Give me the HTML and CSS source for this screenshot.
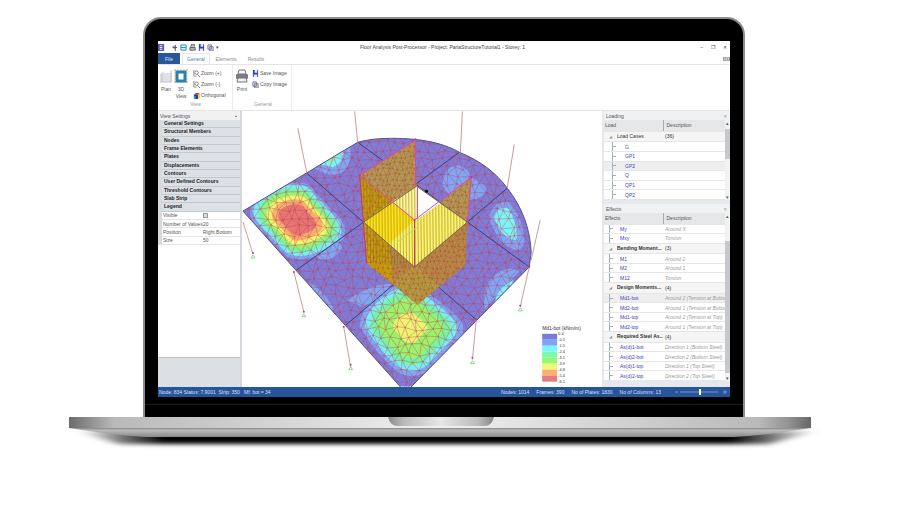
FILE: index.html
```html
<!DOCTYPE html>
<html lang="en">
<head>
<meta charset="utf-8">
<title>Floor Analysis Post-Processor</title>
<link rel="stylesheet" href="styles.css">
</head>
<body>
<main class="laptop">
  <div class="lid">
    <div class="app">
      <header class="titlebar">
        <div class="quick">
          <svg viewBox="0 0 8 8"><rect width="7" height="8" fill="#5a55b8"/><path d="M2 2h3M2 4h3M2 6h3" stroke="#fff"/></svg>
          <svg class="gap" viewBox="0 0 8 8"><path d="M1 3l4-2v6z" fill="#b99"/><path d="M5 1v7M2 4h5" stroke="#555"/></svg>
          <svg viewBox="0 0 8 8"><path d="M1 1h6v6h-6zM1 4h6" fill="#d6f0fa" stroke="#2489b4"/></svg>
          <svg viewBox="0 0 8 8"><path d="M2 3l1-3h3v3M1 4h6v3h-6z" fill="#bbb" stroke="#555"/></svg>
          <svg viewBox="0 0 8 8"><path d="M1 0h6v8h-6z" fill="#3543a8"/><path d="M3 0h3v3h-3zM2 5h4v3h-4z" fill="#e4e7fa"/></svg>
          <svg viewBox="0 0 8 8"><path d="M1 1h4v5h-4zM3 3h4v5h-4z" fill="#e4e6f6" stroke="#6c6f98"/></svg>
          <span>▾</span>
        </div>
        <h1>Floor Analysis Post-Processor - Project: ParlaStructureTutorial1 - Storey: 1</h1>
        <div class="win"><button aria-label="Minimize">–</button><button aria-label="Maximize">❐</button><button aria-label="Close">✕</button></div>
      </header>
      <nav class="tabs">
        <button class="file">File</button><button class="current">General</button><button>Elements</button><button>Results</button>
        <svg class="help" viewBox="0 0 8 6"><path d="M0 1h8v4h-8z" fill="#8b9096"/><path d="M2 2v2M4 2v2M6 2v2" stroke="#fff"/></svg>
      </nav>
      <section class="ribbon">
        <div class="group view">
          <div class="tools">
            <button class="big"><svg viewBox="0 0 14 14"><path d="M1 5l4-3v11h-4zM5 4h8v9h-8z" fill="#dfe1e6"/><path d="M1 13h12M12 1v12M3 5v8" stroke="#c0c3cc"/></svg>Plan</button>
            <button class="big"><svg viewBox="0 0 14 14"><path d="M1 0v14M13 0v14M0 1h14M0 13h14" stroke="#e2bd78" stroke-dasharray="2 1"/><rect x="3" y="3" width="8" height="9" fill="#fff" stroke="#2581ad" stroke-width="3"/></svg>3D<br>View</button>
            <div class="stack">
              <button><svg viewBox="0 0 8 8"><path d="M1 0v7h3" fill="none" stroke="#888"/><circle cx="4" cy="3" r="2" fill="#fff" stroke="#777"/><path d="M5 5l3 3" stroke="#a55"/></svg>Zoom (+)</button>
              <button><svg viewBox="0 0 8 8"><path d="M1 0v7h3" fill="none" stroke="#888"/><circle cx="4" cy="3" r="2" fill="#fff" stroke="#777"/><path d="M5 5l3 3" stroke="#777"/></svg>Zoom (-)</button>
              <button><svg viewBox="0 0 8 8"><path d="M1 3l2-2h5l-2 2z" fill="#d33b42"/><path d="M1 3h5v5h-5z" fill="#253a9c"/><path d="M6 3l2-2v5l-2 2z" fill="#ffd42a"/><path d="M1 5h2v3h-2z" fill="#29b0c8"/></svg>Orthogonal</button>
            </div>
          </div>
          <span class="caption">View</span>
        </div>
        <div class="group general">
          <div class="tools">
            <button class="big"><svg viewBox="0 0 14 14"><path d="M3 5l1-4h6l1 4z" fill="#f7f7f7" stroke="#777"/><rect x="1" y="5" width="12" height="5" rx="1" fill="#777c82"/><path d="M3 9h8l1 4h-10z" fill="#eef1f3" stroke="#777"/></svg>Print</button>
            <div class="stack">
              <button><svg viewBox="0 0 8 8"><path d="M1 0h6v8h-6z" fill="#3543a8"/><path d="M3 0h3v3h-3zM2 5h4v3h-4z" fill="#e4e7fa"/></svg>Save Image</button>
              <button><svg viewBox="0 0 8 8"><path d="M1 1h4v5h-4zM3 3h4v5h-4z" fill="#e4e6f6" stroke="#6c6f98"/></svg>Copy Image</button>
            </div>
          </div>
          <span class="caption">General</span>
        </div>
      </section>
      <div class="workspace">
        <aside class="settings">
          <h2 class="panel-title"><span>View Settings</span><i>▪</i></h2>
          <div class="rows">
            <b>General Settings</b><b>Structural Members</b><b>Nodes</b><b>Frame Elements</b><b>Plates</b><b>Displacements</b><b>Contours</b><b>User Defined Contours</b><b>Threshold Contours</b><b>Slab Strip</b><b>Legend</b>
            <div class="prop"><label for="visible">Visible</label><input id="visible" type="checkbox" checked></div>
            <div class="prop"><label for="count">Number of Values</label><input id="count" type="text" value="20"></div>
            <div class="prop"><label for="position">Position</label><select id="position"><option>Right Bottom</option></select></div>
            <div class="prop"><label for="size">Size</label><input id="size" type="text" value="50"></div>
          </div>
          <div class="hint"></div>
        </aside>
        <section class="canvas">
          <svg id="model" viewBox="242 111 361 276" role="img" aria-label="Slab moment contours">
            <defs>
              <clipPath id="slab"><path d="M243 211L358 142Q372 138 392 138C423 138 444 143 460 152C482 161 497 173 508 188C523 207 531 229 532 252L530 267L406 393Z"/></clipPath>
              <clipPath id="walls"><path d="M360 175L416 140L417 186L364 222ZM472 177L441 202L468 222ZM364 222L415 267L468 222L466 265L418 305L367 263Z"/></clipPath>
              <clipPath id="inner"><path d="M360 175L415 220L441 203L468 222L415 267L369 263Z"/><path d="M364 222L417 186V220L415 267Z"/></clipPath>
            </defs>
            <g clip-path="url(#slab)">
              <path d="M242 111h361v276h-361z" fill="#807bd5"/>
              <g fill="#80a6f5">
                <path d="M315 168L350 145Q353 163 345 170Q333 180 315 168Z"/>
                <path d="M443 184Q446 165 458 165Q470 167 471 177Q484 182 487 189Q484 200 466 200Q447 197 443 184Z"/>
                <path d="M490 218Q493 201 509 202Q524 217 525 241Q524 250 517 250Q499 246 490 218Z"/>
                <path d="M485 306Q482 287 496 275Q507 265 520 271L485 310Z"/>
                <path d="M307 283Q319 284 333 307V313Z"/>
                <path d="M347 301Q368 284 392 284Q379 300 363 307Z"/>
                <path d="M316 256Q344 236 342 248Q335 262 320 259Z"/>
              </g>
              <path d="M321 164L343 150Q345 162 333 167ZM495 218Q499 204 510 209Q520 229 517 240Q502 239 495 218ZM495 305Q496 290 514 280V292Z" fill="#7ef3f5"/>
              <path d="M326 161L337 153Q338 160 332 163Z" fill="#88efb5"/>
              <g id="peakA"></g>
              <g id="peakB"></g>
              <g id="mesh" stroke="#bd4058" fill="none"></g>
              <path d="M307 173L477 320M358 142L530 267M294 272L364 222L460 152M344 327L468 222L508 188" fill="none" stroke="#35417e"/>
            </g>
            <path d="M243 211L358 142Q372 138 392 138C423 138 444 143 460 152C482 161 497 173 508 188C523 207 531 229 532 252L530 267L406 393Z" fill="none" stroke="#55508f"/>
            <path d="M360 175L416 140L417 186L364 222ZM472 177L441 202L468 222Z" fill="#b29b58"/>
            <path d="M364 222L415 267L468 222L466 265L418 305L367 263Z" fill="#b78b48"/>
            <path d="M393 283L415 265L440 286L418 305Z" fill="#b1a640" opacity=".7"/>
            <path d="M360 175L393 201L364 222ZM364 222L390 245L393 283L367 263Z" fill="#c9a208"/>
            <path d="M364 222L417 186L468 222L415 267Z" fill="#fff46a"/>
            <path d="M364 222L393 201L415 220L390 244Z" fill="#ffe414"/>
            <path d="M393 201L417 186V220Z" fill="#fff69a"/>
            <g clip-path="url(#walls)"><g id="wallmesh" stroke="#a95a32" fill="none"></g></g>
            <g clip-path="url(#inner)"><g id="ribs" stroke="#89752a" fill="none"></g></g>
            <path d="M418 186L441 203L418 219Z" fill="#fff"/>
            <path d="M364 222L417 186L468 222L415 267Z" fill="none" stroke="#756a4c"/>
            <path d="M360 175L416 140V186M360 175L415 220L472 177L468 222M418 186V219" fill="none" stroke="#e045ae"/>
            <path d="M360 175L367 263M415 220V267" fill="none" stroke="#c63868"/>
            <circle cx="427" cy="191" r="1.6" fill="#111"/>
            <path d="M398 242L418 227" stroke="#b3e34a"/>
            <path d="M298 128L307 173M355 111L358 142M463 111L461 152M515 144L508 188M541 220L532 260M243 222L253 254M294 272L304 312M344 327L351 368M477 320L473 360M530 267L521 307" fill="none" stroke="#cf9b9b"/>
            <g fill="#d0308e"><circle cx="253" cy="253" r="1"/><circle cx="304" cy="312" r="1"/><circle cx="351" cy="365" r="1"/><circle cx="473" cy="358" r="1"/><circle cx="521" cy="306" r="1"/><circle cx="294" cy="272" r="1"/><circle cx="344" cy="327" r="1"/><circle cx="477" cy="320" r="1"/><circle cx="530" cy="267" r="1"/><circle cx="360" cy="175" r="1"/><circle cx="416" cy="139" r="1"/><circle cx="472" cy="177" r="1"/><circle cx="415" cy="267" r="1"/><circle cx="415" cy="220" r="1"/></g>
            <path d="M251 258l2-3 2 3zM302 317l2-3 2 3zM349 370l2-3 2 3zM471 364l2-3 2 3zM519 311l2-3 2 3z" fill="none" stroke="#80df86"/>
            <text class="scale-title" x="543" y="330">Md1-bot (kNm/m)</text>
            <g id="scale"></g>
          </svg>
        </section>
        <aside class="trees">
          <section class="tree">
            <h2 class="panel-title"><span>Loading</span><i>▿</i></h2>
            <div class="scroll">
              <table class="loads">
                <thead><tr><th>Load</th><th>Description</th></tr></thead>
                <tbody>
                  <tr class="parent"><td><i>◢</i>Load Cases</td><td>(36)</td></tr>
                  <tr><td>G</td><td></td></tr><tr><td>GP1</td><td></td></tr><tr class="chosen"><td>GP2</td><td></td></tr><tr><td>Q</td><td></td></tr><tr><td>QP1</td><td></td></tr><tr><td>QP2</td><td></td></tr>
                </tbody>
              </table>
              <div class="bar"><span>▴</span><div class="thumb high"></div><span>▾</span></div>
            </div>
          </section>
          <section class="tree">
            <h2 class="panel-title"><span>Effects</span><i>▿</i></h2>
            <div class="scroll">
              <table class="effects">
                <thead><tr><th>Effects</th><th>Description</th></tr></thead>
                <tbody>
                  <tr><td>My</td><td>Around X</td></tr><tr><td>Mxy</td><td>Torsion</td></tr>
                  <tr class="parent strong"><td><i>◢</i>Bending Moment...</td><td>(3)</td></tr>
                  <tr><td>M1</td><td>Around 2</td></tr><tr><td>M2</td><td>Around 1</td></tr><tr><td>M12</td><td>Torsion</td></tr>
                  <tr class="parent strong"><td><i>◢</i>Design Moments...</td><td>(4)</td></tr>
                  <tr class="chosen"><td>Md1-bot</td><td>Around 2 (Tension at Bottom</td></tr><tr><td>Md2-bot</td><td>Around 1 (Tension at Bottom</td></tr><tr><td>Md1-top</td><td>Around 2 (Tension at Top)</td></tr><tr><td>Md2-top</td><td>Around 1 (Tension at Top)</td></tr>
                  <tr class="parent strong"><td><i>◢</i>Required Steel As...</td><td>(4)</td></tr>
                  <tr><td>As(d)1-bot</td><td>Direction 1 (Bottom Steel)</td></tr><tr><td>As(d)2-bot</td><td>Direction 2 (Bottom Steel)</td></tr><tr><td>As(d)1-top</td><td>Direction 1 (Top Steel)</td></tr><tr><td>As(d)2-top</td><td>Direction 2 (Top Steel)</td></tr>
                </tbody>
              </table>
              <div class="bar"><span>▴</span><div class="thumb low"></div><span>▾</span></div>
            </div>
          </section>
        </aside>
      </div>
      <footer class="status">
        <span>Node: 834 Status: 7.9001&nbsp; Strip: 350&nbsp; &nbsp;Mf: bot = 34</span>
        <span class="push">Nodes: 1014</span><span>Frames: 390</span><span>No of Plates: 1830</span><span>No of Columns: 13</span>
        <svg viewBox="0 0 52 8"><path d="M0 4h3M5 4h38M48 4h4M50 2v4" stroke="#7197cf"/><path d="M25 1v6" stroke="#fff" stroke-width="2"/></svg>
      </footer>
    </div>
    <div class="chin"></div>
  </div>
  <svg class="base" viewBox="0 0 742 40" aria-hidden="true">
    <defs>
      <linearGradient id="deck"><stop offset="0" stop-color="#6b6b6b"/><stop offset=".03" stop-color="#929292"/><stop offset=".06" stop-color="#b9b9b9"/><stop offset=".5" stop-color="#f0f0f0"/><stop offset=".93" stop-color="#b9b9b9"/><stop offset=".97" stop-color="#929292"/><stop offset="1" stop-color="#666"/></linearGradient>
      <linearGradient id="notch"><stop offset="0" stop-color="#8a8a8a"/><stop offset=".15" stop-color="#bbb"/><stop offset=".5" stop-color="#e6e6e6"/><stop offset=".85" stop-color="#bbb"/><stop offset="1" stop-color="#858585"/></linearGradient>
      <linearGradient id="under" x2="0" y2="1"><stop offset="0" stop-color="#888"/><stop offset=".25" stop-color="#bbb"/><stop offset="1" stop-color="#888"/></linearGradient>
      <linearGradient id="fade"><stop offset="0" stop-color="#000" stop-opacity="0"/><stop offset=".12" stop-color="#000"/><stop offset=".88" stop-color="#000"/><stop offset="1" stop-color="#000" stop-opacity="0"/></linearGradient>
      <filter id="soft" x="-5%" y="-100%" width="110%" height="300%"><feGaussianBlur stdDeviation="5 2"/></filter>
    </defs>
    <path d="M6 14H750L700 27H50Z" fill="url(#fade)" filter="url(#soft)"/>
    <path d="M0 11H742Q700 18 665 20H77Q42 18 0 11Z" fill="url(#under)"/>
    <path d="M0 0H742V11H0Z" fill="url(#deck)"/>
    <path d="M319 0H425Q423 9 415 9H329Q321 9 319 0Z" fill="url(#notch)"/>
  </svg>
</main>
<script src="model.js"></script>
</body>
</html>
```
FILE: styles.css
```css
* { box-sizing: border-box; }
body { margin: 0; background: #fff; color: #555; font: 5px/6px "Liberation Sans", sans-serif; overflow-x: hidden; }
h1, h2 { margin: 0; font-size: 5px; font-weight: 400; }
button, input, select { margin: 0; padding: 0; border: 0; background: none; color: inherit; font: inherit; border-radius: 0; appearance: none; }
i { font-style: normal; }

.laptop { padding: 17px 91px 0 69px; }
.lid { margin: 0 66px 0 74px; padding: 22px 13px 0; border: 2px solid #8c8c8c; border-bottom: 0; border-radius: 18px 18px 0 0; background: #000; }
.chin { margin: 7px -13px 0; height: 13px; border-top: 1px solid #1c1c1c; }
.base { display: block; width: 100%; overflow: visible; }

.app { background: #fff; }
.titlebar { display: flex; align-items: center; height: 12px; color: #444; }
.quick { display: flex; align-items: center; gap: 2px; flex: 1; }
.quick svg { width: 7px; height: 7px; }
.quick .gap { margin-left: 4px; }
.win { flex: 1; display: flex; justify-content: flex-end; gap: 8px; padding-right: 3px; }
.tabs { display: flex; align-items: stretch; height: 12px; border-bottom: 1px solid #e4e4e4; color: #8a8a8a; }
.tabs button { width: 30px; }
.tabs .file { width: 22px; background: #2a5699; color: #dbe6f5; }
.tabs .current { width: 28px; margin: 0 1px 0 2px; border: 1px solid #e4e4e4; border-bottom: 0; color: #4b7db5; }
.help { width: 7px; height: 6px; margin: 3px 0 0 auto; }

.ribbon { display: flex; height: 46px; border-bottom: 1px solid #e4e4e4; color: #555; }
.group { display: flex; flex-direction: column; justify-content: space-between; padding: 4px 0 3px 1px; border-right: 1px solid #ececec; }
.view { width: 75px; }
.general { width: 59px; padding-left: 2px; }
.tools { display: flex; gap: 1px; }
.big { width: 14px; line-height: 7px; text-align: center; align-self: flex-start; }
.big svg { display: block; width: 14px; height: 14px; margin-bottom: 3px; }
.stack { display: flex; flex-direction: column; gap: 3px; margin-left: 4px; }
.general .stack { margin-left: 2px; }
.stack button { display: flex; align-items: center; gap: 1px; height: 8px; white-space: nowrap; }
.stack svg { width: 7px; height: 7px; }
.caption { text-align: center; color: #999; }

.workspace { display: flex; height: 276px; }
.panel-title { display: flex; justify-content: space-between; align-items: center; height: 9px; padding: 0 3px 0 2px; background: #f0f1f3; color: #555; }
.settings { display: flex; flex-direction: column; width: 84px; border-right: 2px solid #d4d7de; }
.rows { display: grid; grid-template-rows: repeat(15, 1fr); height: 125px; border-left: 4px solid #d5dade; }
.rows b { padding-left: 2px; background: #dce1e5; border-bottom: 1px solid #c3c9ce; color: #222; line-height: 7px; }
.prop { display: grid; grid-template-columns: 40px 1fr; align-items: center; padding-left: 1px; border-bottom: 1px solid #e2e4e7; white-space: nowrap; }
.prop input, .prop select { width: 100%; height: 6px; }
.prop input[type="checkbox"] { width: 5px; height: 5px; border: 1px solid #999; background: #ddd; }
.hint { height: 30px; margin-top: auto; background: #dae0e4; border-top: 1px solid #bfc4ca; }
.canvas { flex: 1; min-width: 0; }
.canvas svg { display: block; width: 100%; height: 100%; }
#mesh, #wallmesh { opacity: .65; }
#ribs { opacity: .7; }
#scale text { font-size: 4px; fill: #333; }
.scale-title { font-size: 5px; fill: #333; }

.trees { display: flex; flex-direction: column; gap: 4px; width: 128px; padding-left: 2px; background: #e6e8ef; }
.scroll { display: grid; grid-template-columns: minmax(0, 1fr) 5px; background: #fff; }
table { width: 100%; table-layout: fixed; border-collapse: collapse; }
.loads { height: 80px; }
.effects { height: 168px; }
th, td { padding: 0 0 0 3px; overflow: hidden; text-align: left; white-space: nowrap; border-bottom: 1px solid #e6e6e6; }
th { height: 11px; padding-left: 1px; background: #e6e7e9; color: #555; font-weight: 400; }
th + th { padding-left: 3px; border-left: 1px solid #aaa; }
th:first-child { width: 59px; }
td:first-child { padding-left: 16px; color: #4240bb; background: linear-gradient(#9cb0bd, #9cb0bd) 6px 50% / 3px 1px no-repeat, linear-gradient(#9cb0bd, #9cb0bd) 5px 0 / 1px 100% no-repeat; }
.loads td:first-child { padding-left: 21px; background-position: 9px 50%, 8px 0; }
td + td { padding-left: 2px; color: #999; font-style: italic; }
.parent td:first-child, .loads .parent td:first-child { padding-left: 3px; background: #f5f5f5; color: #333; }
.parent td + td { background: #f5f5f5; color: #333; font-style: normal; }
.parent i { display: inline-block; width: 10px; padding-left: 2px; color: #999; font-size: 4px; font-weight: 400; }
.strong td:first-child { font-weight: 700; }
.chosen { background: #eee; }
.bar { display: flex; flex-direction: column; justify-content: space-between; background: #f2f2f2; color: #555; text-align: center; }
.thumb { background: #c6c8cb; }
.high { height: 30px; margin-bottom: 32px; }
.low { height: 132px; margin-top: 20px; }

.status { display: flex; align-items: center; gap: 7px; height: 10px; padding: 0 3px 0 1px; background: #28549b; color: #d5e1f2; white-space: nowrap; }
.push { margin-left: auto; }
.status svg { width: 52px; height: 8px; margin-left: 7px; }
```
FILE: model.js
```js
const NS = "http://www.w3.org/2000/svg";

function add(parent, tag, attrs, text) {
  const node = document.createElementNS(NS, tag);
  for (const key in attrs) node.setAttribute(key, attrs[key]);
  if (text) node.textContent = text;
  document.getElementById(parent).appendChild(node);
}

// Repeatable pseudo-random jitter so the mesh is the same on each load
let seed = 7;
function jitter(amount) {
  seed = (seed * 16807) % 2147483647;
  return (seed / 2147483647 - 0.5) * amount;
}

function triangulate(id, x0, y0, cols, rows, dx, dy, width) {
  const points = [];
  for (let r = 0; r < rows; r++) {
    points.push([]);
    for (let c = 0; c < cols; c++) {
      points[r].push([x0 + c * dx + (r % 2) * dx / 2 + jitter(dx * 0.6), y0 + r * dy + jitter(dy * 0.6)]);
    }
  }
  let d = "";
  let dots = "";
  for (let r = 0; r < rows - 1; r++) {
    for (let c = 1; c < cols - 1; c++) {
      const p = points[r][c];
      const odd = r % 2;
      for (const q of [points[r][c + 1], points[r + 1][c - 1 + odd], points[r + 1][c + odd]]) {
        d += `M${p[0].toFixed(1)} ${p[1].toFixed(1)}L${q[0].toFixed(1)} ${q[1].toFixed(1)}`;
      }
      dots += `M${p[0].toFixed(1)} ${p[1].toFixed(1)}h1`;
    }
  }
  add(id, "path", { d, "stroke-width": width });
  add(id, "path", { d: dots, "stroke-width": 1.4, stroke: "#c92b3b" });
}

triangulate("mesh", 225, 125, 38, 33, 9, 8.5, 0.6);
triangulate("wallmesh", 350, 130, 32, 34, 4.5, 5.5, 0.6);

let ribs = "";
for (let x = 361; x < 470; x += 3) ribs += `M${x} ${178 + jitter(8)}L${x + 1} 270`;
add("ribs", "path", { d: ribs, "stroke-width": 0.8 });

// Nested contour bands, each a shrunken copy of the outer outline
function peak(id, d, cx, cy, bands) {
  for (const [scale, fill] of bands) {
    add(id, "path", { d, fill, transform: `translate(${cx} ${cy}) scale(${scale}) translate(${-cx} ${-cy})` });
  }
}

peak("peakA", "M252 211Q254 199 264 192Q282 182 299 184Q310 184 315 194L339 219Q346 229 341 239Q332 248 316 254Q300 260 288 255Q278 247 268 234Q252 222 252 211Z", 297, 219, [
  [1.05, "#80a6f5"], [0.97, "#78eef2"], [0.87, "#78f3a5"], [0.77, "#9bf36c"], [0.67, "#f3f372"], [0.56, "#f8b16c"], [0.42, "#e77673"]]);
peak("peakB", "M363 327Q363 313 374 303Q390 288 403 285Q420 286 429 296Q449 310 459 322Q464 331 456 339L427 369Q411 378 398 369Q380 355 363 327Z", 410, 327, [
  [1.06, "#80a6f5"], [0.95, "#78eef2"], [0.83, "#78f3a5"], [0.68, "#9bf36c"], [0.35, "#eff372"]]);

const colours = ["#7c7cd8", "#7ba5f4", "#7df5fb", "#7dfaad", "#98f872", "#f1f877", "#f9b071", "#e67b7b"];
colours.forEach((fill, i) => add("scale", "rect", { x: 543, y: 334 + i * 6, width: 15, height: 6, fill }));
["0.4", "-0.5", "-1.5", "-2.4", "-3.1", "-3.9", "-4.8", "-5.4", "-6.1"].forEach((t, i) => add("scale", "text", { x: 559, y: 335 + i * 6 }, t));
```
